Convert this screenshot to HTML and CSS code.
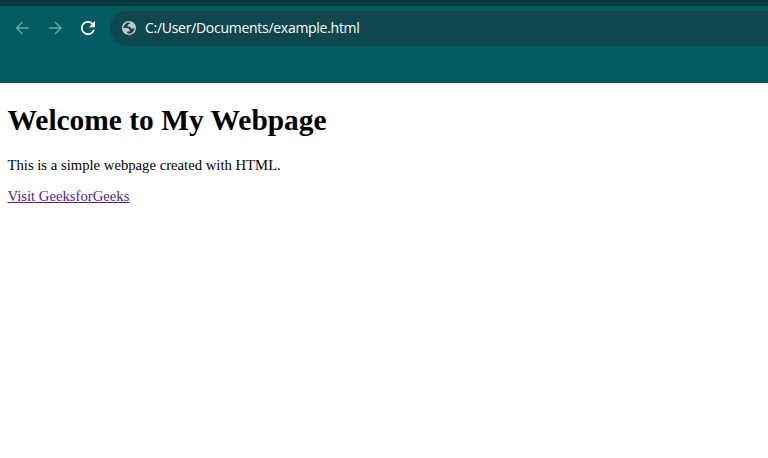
FILE: index.html
```html
<!DOCTYPE html>
<html lang="en">
<head>
<meta charset="utf-8">
<title>My Webpage</title>
<link rel="stylesheet" href="styles.css">
</head>
<body>
<header class="browser">
  <div class="toolbar">
    <svg class="nav back" viewBox="0 0 14 14"><path d="M13.7 7H1.7M7.500 1L1.500 7l6 6"/></svg>
    <svg class="nav forward" viewBox="0 0 14 14"><path d="M.8 7h12M7 1l6 6-6 6"/></svg>
    <svg class="reload" viewBox="4 4 16 16"><path d="M17.65 6.35A7.96 7.96 0 0 0 12 4a8 8 0 1 0 7.73 10h-2.08A6 6 0 1 1 12 6c1.66 0 3.14.69 4.22 1.78L13 11h7V4z"/></svg>
    <div class="address">
      <svg class="globe" viewBox="2 2 20 20"><path fill-rule="evenodd" d="M12 2C6.480 2 2 6.480 2 12s4.480 10 10 10 10-4.480 10-10S17.520 2 12 2zM4 12h4.400c3.407.022 4.922 1.730 4.543 5.127H9.488v2.470a8.004 8.004 0 0 0 10.498-8.083C19.327 12.504 18.332 13 17 13c-2.137 0-3.206-.916-3.206-2.750h-3.748c-.274-2.728.683-4.092 2.870-4.092 0-.975.327-1.597.811-1.970A8.004 8.004 0 0 0 4 12z"/></svg>
      <span class="url">C:/User/Documents/example.html</span>
    </div>
  </div>
</header>
<main class="page">
  <h1>Welcome to My Webpage</h1>
  <p>This is a simple webpage created with HTML.</p>
  <a href="#">Visit GeeksforGeeks</a>
</main>
</body>
</html>
```
FILE: styles.css
```css
* { box-sizing: border-box; }
body {
  margin: 0;
  background: #fff;
  color: #000;
  font-family: "Liberation Serif", serif;
  font-size: 14.7px;
  overflow: hidden;
}
.browser {
  height: 83px;
  background: #045c62;
  border-top: 6px solid #02393e;
}
.toolbar {
  display: flex;
  align-items: center;
  height: 44px;
  padding-left: 15px;
}
.nav {
  width: 14px;
  height: 14px;
  fill: none;
  stroke: #6ba4a7;
  stroke-width: 1.5;
}
.forward { margin-left: 19px; }
.reload {
  width: 14px;
  height: 14px;
  margin-left: 19px;
  fill: #fff;
}
.address {
  display: flex;
  flex: 1;
  align-items: center;
  height: 35px;
  margin-left: 15px;
  padding-left: 12px;
  border-radius: 18px 0 0 18px;
  background: #0f474e;
}
.globe {
  width: 14px;
  height: 14px;
  fill: #c7c7c9;
}
.url {
  margin-left: 9px;
  color: #fff;
  font: 14px/20px "Open Sans", sans-serif;
  letter-spacing: -0.28px;
  white-space: nowrap;
}
.page { padding: 20px 7.5px; }
h1 {
  margin: 0;
  font-size: 29.45px;
  line-height: 35px;
}
p {
  margin: 19px 0 14px;
  line-height: 17px;
}
a {
  display: block;
  width: max-content;
  color: #551a8b;
  line-height: 17px;
}
```
